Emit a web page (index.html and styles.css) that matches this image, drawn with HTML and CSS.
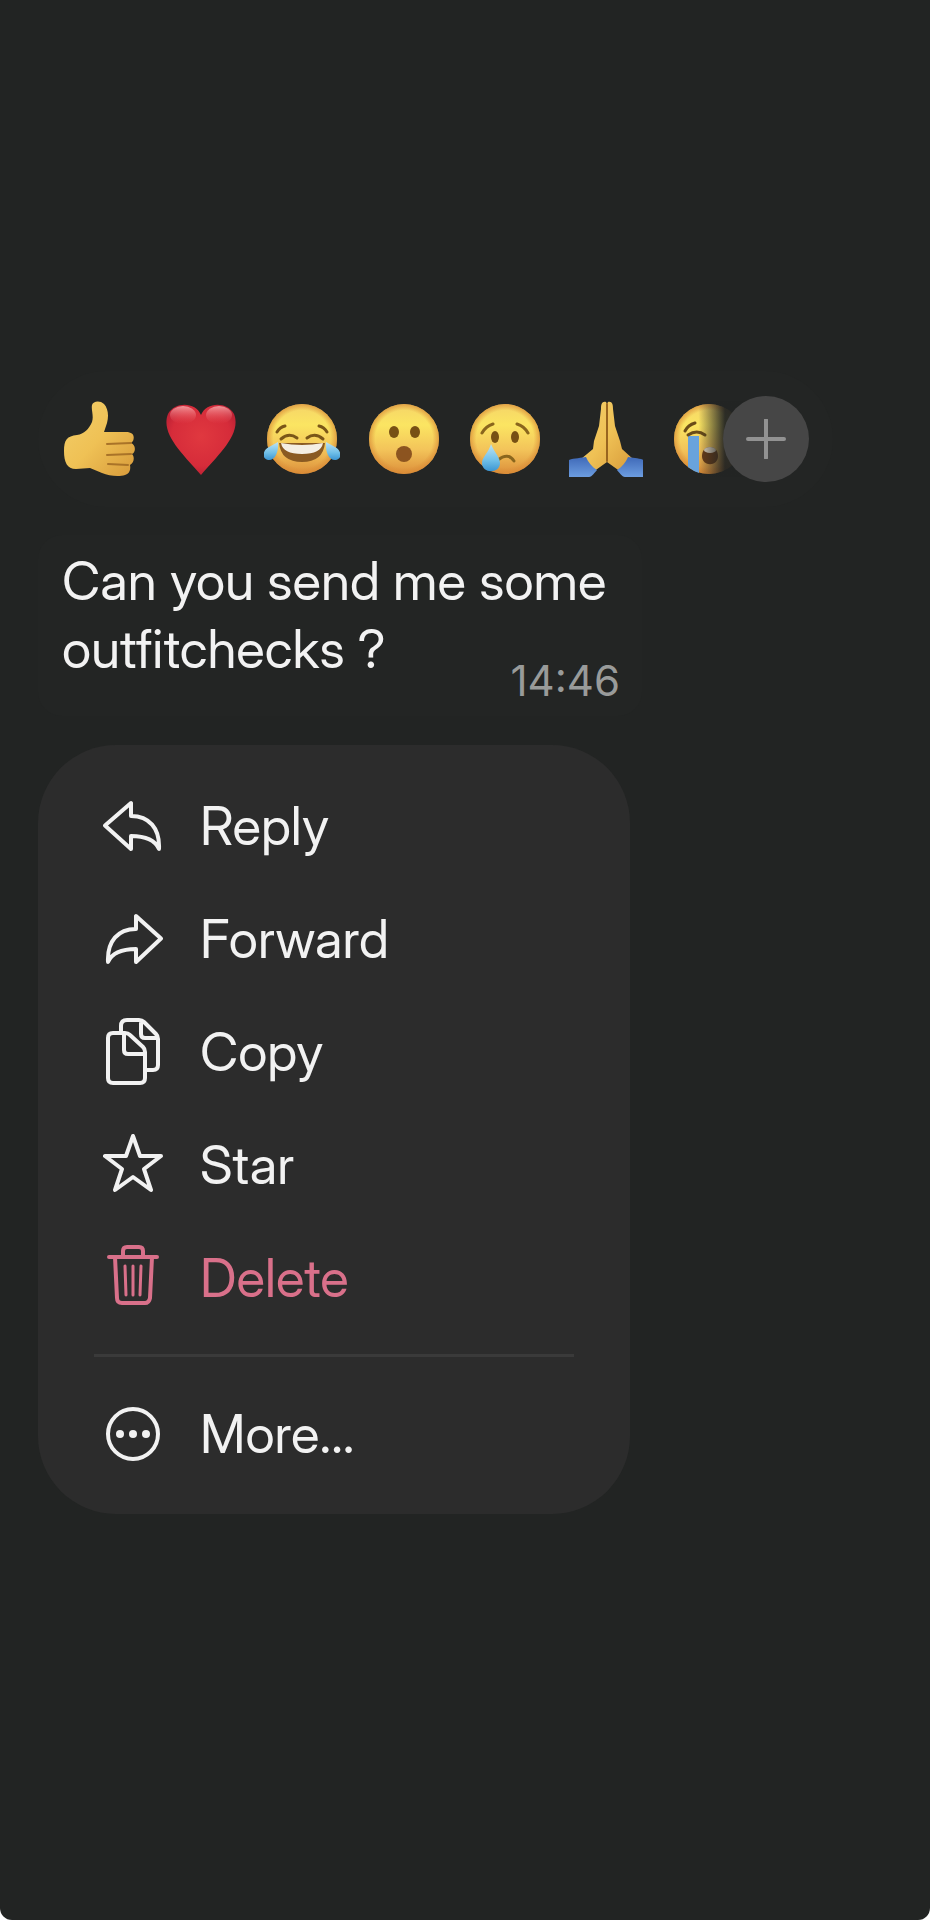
FILE: index.html
```html
<!DOCTYPE html>
<html lang="en">
<head>
<meta charset="utf-8">
<meta name="viewport" content="width=device-width, initial-scale=1">
<title>Message actions</title>
<link rel="stylesheet" href="styles.css">
</head>
<body>
<svg class="defs" aria-hidden="true">
  <defs>
    <linearGradient id="face" x1="0" y1="0" x2="0" y2="1">
      <stop offset="0" stop-color="#f5d468"/><stop offset=".3" stop-color="#fbe562"/><stop offset=".65" stop-color="#f3c45a"/><stop offset="1" stop-color="#dc8f3a"/>
    </linearGradient>
    <radialGradient id="rim" cx=".5" cy=".5" r=".5">
      <stop offset=".82" stop-color="#d98a35" stop-opacity="0"/><stop offset="1" stop-color="#d98a35" stop-opacity=".7"/>
    </radialGradient>
    <linearGradient id="hand" x1="0" y1="0" x2="1" y2="1">
      <stop offset="0" stop-color="#f3cf6a"/><stop offset=".5" stop-color="#efc155"/><stop offset="1" stop-color="#d79a3a"/>
    </linearGradient>
    <radialGradient id="heart" cx=".5" cy=".45" r=".6">
      <stop offset="0" stop-color="#e0383f"/><stop offset=".7" stop-color="#d62c3a"/><stop offset="1" stop-color="#b71f33"/>
    </radialGradient>
    <linearGradient id="shine" x1="0" y1="0" x2="0" y2="1">
      <stop offset="0" stop-color="#f7a3a6" stop-opacity=".9"/><stop offset="1" stop-color="#e84d55" stop-opacity="0"/>
    </linearGradient>
    <linearGradient id="tear" x1="0" y1="0" x2="0" y2="1">
      <stop offset="0" stop-color="#bfe3f3"/><stop offset=".6" stop-color="#6fbfe8"/><stop offset="1" stop-color="#3b95d2"/>
    </linearGradient>
    <linearGradient id="sleeve" x1="0" y1="0" x2="0" y2="1">
      <stop offset="0" stop-color="#3f69b8"/><stop offset="1" stop-color="#6c9de0"/>
    </linearGradient>
    <linearGradient id="shade" x1="0" y1="0" x2="1" y2="0">
      <stop offset=".4" stop-color="#222423" stop-opacity="0"/><stop offset=".75" stop-color="#222423" stop-opacity=".95"/>
    </linearGradient>
  </defs>
</svg>
<main class="screen">
  <div class="reactions" role="group" aria-label="Reactions">
    <button class="reaction" type="button" aria-label="Thumbs up">
      <svg class="emoji" viewBox="0 0 76 76">
        <path fill="url(#hand)" d="M30 4C31 0 38 -1 42 3C46 7 47 15 45 22L42 31H64C71 31 73 35 71 40L69 42C74 44 74 51 70 53C73 56 72 62 68 64C69 69 67 73 63 74C57 76 47 75 40 72L28 67L14 68C5 68 2 61 2 50C2 39 5 35 15 34C22 33 27 28 30 21C32 15 29 9 30 4Z"/>
        <path fill="none" stroke="#a97328" stroke-width="2" stroke-linecap="round" d="M69 42L45 43M69 53L45 54M66 64L46 63"/>
      </svg>
    </button>
    <button class="reaction" type="button" aria-label="Red heart">
      <svg class="emoji" viewBox="0 0 76 76">
        <path fill="url(#heart)" d="M38 14C33 1 12 0 5 13C-3 33 21 54 38 74C55 54 79 33 71 13C64 0 43 1 38 14Z"/>
        <ellipse cx="20" cy="14" rx="13" ry="9" fill="url(#shine)"/><ellipse cx="56" cy="14" rx="13" ry="9" fill="url(#shine)"/>
      </svg>
    </button>
    <button class="reaction" type="button" aria-label="Tears of joy">
      <svg class="emoji" viewBox="0 0 76 76">
        <circle cx="38" cy="38" r="35" fill="url(#face)"/><circle cx="38" cy="38" r="35" fill="url(#rim)"/>
        <path fill="none" stroke="#7a5618" stroke-width="3" stroke-linecap="round" d="M13 31Q16 26 21 25M63 31Q60 26 55 25M17 38Q25 31 33 37M43 37Q51 31 59 38"/>
        <path fill="#8a5a22" d="M15 42H61Q59 61 38 61T15 42Z"/>
        <path fill="#f4eee3" d="M17 42Q38 46 59 42Q57 53 38 53T17 42Z"/>
        <path fill="url(#tear)" d="M14 41C15 51 11 60 4 59C-3 57 -1 49 5 46ZM62 41C61 51 65 60 72 59C79 57 77 49 71 46Z"/>
      </svg>
    </button>
    <button class="reaction" type="button" aria-label="Surprised">
      <svg class="emoji" viewBox="0 0 76 76">
        <circle cx="39" cy="38" r="35" fill="url(#face)"/><circle cx="39" cy="38" r="35" fill="url(#rim)"/>
        <ellipse cx="29" cy="31" rx="5" ry="6" fill="#775014"/><ellipse cx="50" cy="31" rx="5" ry="6" fill="#775014"/>
        <ellipse cx="39" cy="53" rx="8" ry="8" fill="#8c5420"/>
      </svg>
    </button>
    <button class="reaction" type="button" aria-label="Crying">
      <svg class="emoji" viewBox="0 0 76 76">
        <circle cx="39" cy="38" r="35" fill="url(#face)"/><circle cx="39" cy="38" r="35" fill="url(#rim)"/>
        <ellipse cx="29" cy="36" rx="4" ry="6" fill="#775014"/><ellipse cx="49" cy="36" rx="4" ry="6" fill="#775014"/>
        <path fill="none" stroke="#8a661d" stroke-width="3" stroke-linecap="round" d="M16 32Q20 25 27 23M62 32Q58 25 51 23M32 59Q42 51 48 60"/>
        <path fill="url(#tear)" d="M25 43C28 51 34 56 34 62C34 73 16 73 16 62C16 56 23 51 25 43Z"/>
      </svg>
    </button>
    <button class="reaction" type="button" aria-label="Folded hands">
      <svg class="emoji" viewBox="-1 0 76 76">
        <path fill="url(#hand)" d="M38 1C34 0 33 3 33 8L31 25L26 40L25 48L13 58L25 71L39 61L53 71L65 58L54 48L52 40L47 25L45 8C45 3 44 0 40 1L39 3Z"/>
        <path fill="none" stroke="#99651f" stroke-width="2" stroke-linecap="round" d="M39 3V60"/>
        <path fill="url(#sleeve)" d="M18 56C14 57 6 57 1 59V76H21C24 76 27 71 29 69C24 66 20 61 18 56ZM60 56C64 57 71 57 76 59V76H57C54 76 51 71 49 69C54 66 58 61 60 56Z"/>
      </svg>
    </button>
    <button class="reaction" type="button" aria-label="Loudly crying">
      <svg class="emoji" viewBox="0 0 76 76">
        <circle cx="41" cy="38" r="35" fill="url(#face)"/><circle cx="41" cy="38" r="35" fill="url(#rim)"/>
        <path fill="#69a3dc" d="M20 35H31V72Q25 70 20 66Z"/>
        <path fill="none" stroke="#6b4c18" stroke-width="3" stroke-linecap="round" d="M17 30Q20 24 27 22M20 34Q29 28 37 34"/>
        <path fill="#6b3d18" d="M34 55C34 43 50 43 50 55C50 66 34 66 34 55Z"/><ellipse cx="42" cy="49" rx="6" ry="3" fill="#e8ddca"/>
        <rect width="76" height="76" fill="url(#shade)"/>
      </svg>
    </button>
    <button class="more-reactions" type="button" aria-label="More reactions">
      <svg class="plus" viewBox="0 0 40 40"><path fill="none" stroke="#929292" stroke-width="4" stroke-linecap="round" d="M2 20H38M20 1V39"/></svg>
    </button>
  </div>

  <article class="bubble">
    <div class="line">Can you send me some</div>
    <div class="line last">
      <span>outfitchecks ?</span>
      <time class="time" datetime="14:46">14:46</time>
    </div>
  </article>

  <nav class="menu" aria-label="Message actions">
    <button class="item" type="button">
      <svg class="icon" viewBox="0 0 60 72"><path d="M28 13V26C46 26 57 38 56 59C52 50 43 46 28 46V59L2 35.5Z"/></svg>
      <span>Reply</span>
    </button>
    <button class="item" type="button">
      <svg class="icon" viewBox="0 0 60 72"><path d="M33 13V26C15 26 4 38 5 59C9 50 18 46 33 46V59L58 35.5Z"/></svg>
      <span>Forward</span>
    </button>
    <button class="item" type="button">
      <svg class="icon" viewBox="0 0 60 72"><path d="M18 16V10Q18 4 24 4H36Q39 4 41 6L53 18Q55 20 55 23V49Q55 54 50 54H43M38 5V18Q38 22 42 22H54M10 17H22Q25 17 27 19L40 31Q42 33 42 36V62Q42 67 37 67H10Q5 67 5 62V22Q5 17 10 17ZM21 18V34Q21 38 25 38H41"/></svg>
      <span>Copy</span>
    </button>
    <button class="item" type="button">
      <svg class="icon" viewBox="0 0 60 72"><path d="M30 7L37 27H58L41 40L48 61L30 48L12 61L19 40L2 27H23Z"/></svg>
      <span>Star</span>
    </button>
    <button class="item danger" type="button">
      <svg class="icon" viewBox="0 0 60 72"><path d="M6 15H54M20 15V9Q20 5 24 5H36Q40 5 40 9V15M12 15L14 56Q14 61 19 61H42Q46 61 47 56L49 15"/><path class="thin" d="M22 24L23 53M30 24V53M38 24L37 53"/></svg>
      <span>Delete</span>
    </button>
    <hr class="divider">
    <button class="item" type="button">
      <svg class="icon" viewBox="0 0 60 72"><circle cx="30" cy="36" r="25"/><g class="dots"><circle cx="17" cy="36" r="4"/><circle cx="30" cy="36" r="4"/><circle cx="43" cy="36" r="4"/></g></svg>
      <span>More...</span>
    </button>
  </nav>
</main>
</body>
</html>
```
FILE: styles.css
```css
* {
  box-sizing: border-box;
}

html {
  background: #ffffff;
}

body {
  margin: 0;
  font-family: "Inter Display", Inter, "Liberation Sans", sans-serif;
}

button {
  border: 0;
  padding: 0;
  background: none;
  color: inherit;
  font: inherit;
  cursor: pointer;
}

.defs {
  position: absolute;
  width: 0;
  height: 0;
}

.screen {
  display: flex;
  flex-direction: column;
  align-items: flex-start;
  min-height: 100vh;
  padding: 371px 38px 80px;
  background: #222423;
  border-radius: 0 0 12px 12px;
  color: #f2f2f2;
}

.reactions {
  display: flex;
  align-items: center;
  height: 136px;
  padding: 0 24px;
  border-radius: 68px;
  background: #232524;
}

.reaction {
  display: flex;
  flex: none;
  margin-right: 25px;
}

.emoji {
  width: 76px;
  height: 76px;
}

.more-reactions {
  display: flex;
  flex: none;
  align-items: center;
  justify-content: center;
  width: 86px;
  height: 86px;
  margin-left: -46px;
  border-radius: 50%;
  background: #464646;
  z-index: 1;
}

.plus {
  width: 40px;
  height: 40px;
}

.bubble {
  width: 604px;
  max-width: 100%;
  margin-top: 28px;
  padding: 12px 22px 10px 24px;
  border-radius: 24px;
  background: #232524;
}

.line {
  font-size: 53px;
  line-height: 68px;
}

.last {
  display: flex;
  align-items: flex-start;
  justify-content: space-between;
}

.time {
  padding-top: 41px;
  color: #999b9a;
  font-family: Inter, "Liberation Sans", sans-serif;
  font-size: 42px;
  line-height: 50px;
}

.menu {
  width: 592px;
  max-width: 100%;
  margin-top: 29px;
  padding: 24px 0;
  border-radius: 78px;
  background: #2c2c2c;
}

.item {
  display: flex;
  align-items: center;
  gap: 37px;
  width: 100%;
  height: 113px;
  padding: 0 65px;
  font-size: 53px;
  line-height: 64px;
  text-align: left;
}

.icon {
  flex: none;
  width: 60px;
  height: 72px;
  fill: none;
  stroke: currentColor;
  stroke-width: 4;
  stroke-linecap: round;
  stroke-linejoin: round;
}

.thin {
  stroke-width: 3;
}

.dots {
  fill: currentColor;
  stroke: none;
}

.danger {
  color: #d9708a;
}

.divider {
  height: 3px;
  margin: 20px 56px;
  border: 0;
  background: #3a3a3a;
}
```
